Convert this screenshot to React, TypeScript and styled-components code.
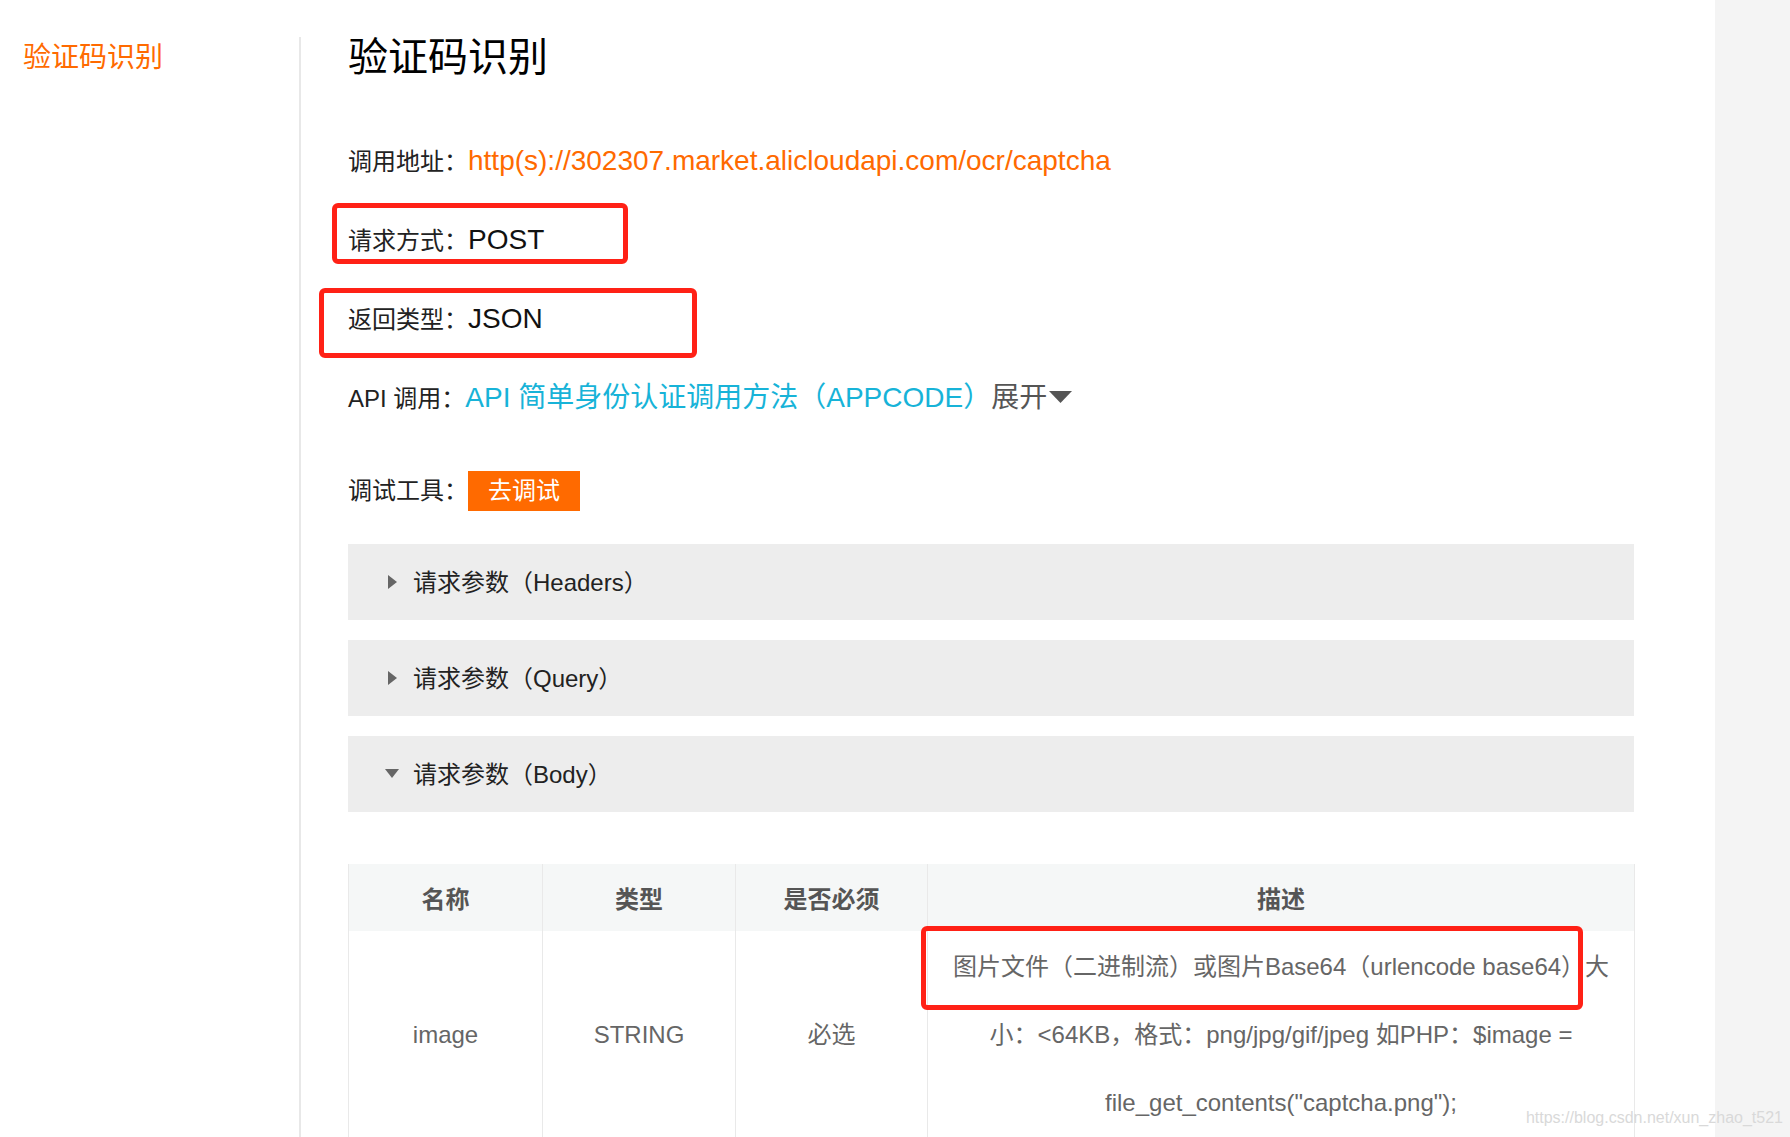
import React from "react";
import styled, { createGlobalStyle } from "styled-components";

const FONT = `"Liberation Sans", Arial, "Noto Sans CJK SC", sans-serif`;

const Global = createGlobalStyle`
  html, body { margin: 0; padding: 0; background: #fff; }
  body { font-family: ${FONT}; }
  #root { width: 1790px; height: 1137px; overflow: hidden; }
`;

const Page = styled.div`
  display: flex;
  width: 1790px;
  height: 1137px;
  overflow: hidden;
  position: relative;
  background: #fff;
`;

const Sidebar = styled.aside`
  flex: none;
  width: 299px;
  box-sizing: border-box;
  padding: 44px 0 0 23px;
`;

const NavItem = styled.div`
  font-size: 28px;
  line-height: 28px;
  color: #ff6a00;
  white-space: nowrap;
`;

const Main = styled.main`
  flex: none;
  width: 1416px;
  box-sizing: border-box;
  margin-top: 37px;
  border-left: 2px solid #e8e8e8;
  padding: 0 81px 0 47px;
  display: flex;
  flex-direction: column;
`;

const RightStrip = styled.div`
  flex: none;
  width: 75px;
  background: #f4f4f4;
`;

const Title = styled.h1`
  margin: 0 0 45px;
  font-size: 40px;
  line-height: 40px;
  font-weight: normal;
  color: #000;
  white-space: nowrap;
`;

const InfoRow = styled.div<{ $gapTop?: number }>`
  position: relative;
  height: 79px;
  margin-top: ${(p) => p.$gapTop ?? 0}px;
  display: flex;
  align-items: center;
  white-space: nowrap;
`;

const Line = styled.div`
  line-height: 1;
  display: flex;
  align-items: baseline;
`;

const Label = styled.span`
  font-size: 24px;
  color: #222;
`;

type Tone = "orange" | "dark" | "link" | "muted";
const toneColor: Record<Tone, string> = {
  orange: "#ff6a00",
  dark: "#111",
  link: "#17b3d8",
  muted: "#555",
};

const Value = styled.span<{ $tone: Tone }>`
  font-size: 28px;
  color: ${(p) => toneColor[p.$tone]};
`;

const Caret = styled.svg`
  margin-left: 2px;
  align-self: center;
  position: relative;
  top: -1px;
`;

const Highlight = styled.div<{ $l: number; $t: number; $w: number; $h: number }>`
  position: absolute;
  left: ${(p) => p.$l}px;
  top: ${(p) => p.$t}px;
  width: ${(p) => p.$w}px;
  height: ${(p) => p.$h}px;
  box-sizing: border-box;
  border: 5px solid #ff2116;
  border-radius: 6px;
  pointer-events: none;
`;

const DebugButton = styled.button`
  height: 40px;
  padding: 0 20px;
  border: none;
  background: #ff6a00;
  color: #fff;
  font-family: ${FONT};
  font-size: 24px;
  line-height: 40px;
  cursor: pointer;
`;

const Panels = styled.div`
  margin-top: 14px;
  display: flex;
  flex-direction: column;
  gap: 20px;
`;

const Panel = styled.div`
  height: 76px;
  box-sizing: border-box;
  padding: 0 0 2px 37px;
  background: #ededed;
  display: flex;
  align-items: center;
  font-size: 24px;
  color: #222;
  white-space: nowrap;
`;

const CaretBox = styled.span`
  width: 14px;
  height: 14px;
  margin-right: 14px;
  display: flex;
  align-items: center;
  justify-content: center;
  position: relative;
  top: 1px;
`;

const Table = styled.table`
  margin-top: 52px;
  width: 1286px;
  table-layout: fixed;
  border-collapse: collapse;
  font-family: ${FONT};
  font-size: 24px;
`;

const Th = styled.th`
  height: 67px;
  padding: 0;
  background: #f5f7f7;
  color: #555;
  font-weight: bold;
  text-align: center;
  vertical-align: middle;
  border-left: 1px solid #e9e9e9;
  border-right: 1px solid #e9e9e9;
`;

const Td = styled.td`
  position: relative;
  padding: 2px 0 0;
  color: #666;
  text-align: center;
  vertical-align: middle;
  line-height: 68px;
  border-left: 1px solid #e9e9e9;
  border-right: 1px solid #e9e9e9;
`;

const DescLine = styled.span`
  display: block;
  white-space: nowrap;
`;

const Watermark = styled.div`
  position: absolute;
  right: 7px;
  bottom: 9px;
  font-size: 16px;
  line-height: 20px;
  color: #d9d9d9;
  white-space: nowrap;
`;

const RightCaret = () => (
  <svg width="9" height="14" viewBox="0 0 9 14">
    <path d="M0 0 L9 7 L0 14 Z" fill="#666" />
  </svg>
);

const DownCaret = () => (
  <svg width="14" height="9" viewBox="0 0 14 9">
    <path d="M0 0 L14 0 L7 9 Z" fill="#666" />
  </svg>
);

export default function App() {
  return (
    <>
      <Global />
      <Page>
        <Sidebar>
          <NavItem>验证码识别</NavItem>
        </Sidebar>
        <Main>
          <Title>验证码识别</Title>

          <InfoRow>
            <Line>
              <Label>调用地址：</Label>
              <Value $tone="orange">http(s)://302307.market.alicloudapi.com/ocr/captcha</Value>
            </Line>
          </InfoRow>

          <InfoRow>
            <Highlight $l={-16} $t={2} $w={296} $h={61} />
            <Line>
              <Label>请求方式：</Label>
              <Value $tone="dark">POST</Value>
            </Line>
          </InfoRow>

          <InfoRow>
            <Highlight $l={-29} $t={8} $w={378} $h={70} />
            <Line>
              <Label>返回类型：</Label>
              <Value $tone="dark">JSON</Value>
            </Line>
          </InfoRow>

          <InfoRow>
            <Line>
              <Label>API 调用：</Label>
              <Value $tone="link">API 简单身份认证调用方法（APPCODE）</Value>
              <Value $tone="muted">展开</Value>
              <Caret width="23" height="12" viewBox="0 0 23 12">
                <path d="M0 0 L23 0 L11.5 12 Z" fill="#555" />
              </Caret>
            </Line>
          </InfoRow>

          <InfoRow $gapTop={14}>
            <Line>
              <Label>调试工具：</Label>
              <DebugButton>去调试</DebugButton>
            </Line>
          </InfoRow>

          <Panels>
            <Panel>
              <CaretBox>
                <RightCaret />
              </CaretBox>
              请求参数（Headers）
            </Panel>
            <Panel>
              <CaretBox>
                <RightCaret />
              </CaretBox>
              请求参数（Query）
            </Panel>
            <Panel>
              <CaretBox>
                <DownCaret />
              </CaretBox>
              请求参数（Body）
            </Panel>
          </Panels>

          <Table>
            <colgroup>
              <col style={{ width: 194 }} />
              <col style={{ width: 193 }} />
              <col style={{ width: 192 }} />
              <col style={{ width: 707 }} />
            </colgroup>
            <thead>
              <tr>
                <Th>名称</Th>
                <Th>类型</Th>
                <Th>是否必须</Th>
                <Th>描述</Th>
              </tr>
            </thead>
            <tbody>
              <tr>
                <Td>image</Td>
                <Td>STRING</Td>
                <Td>必选</Td>
                <Td>
                  <Highlight $l={-7} $t={-5} $w={662} $h={84} />
                  <DescLine>图片文件（二进制流）或图片Base64（urlencode base64）大</DescLine>
                  <DescLine>小：&lt;64KB，格式：png/jpg/gif/jpeg 如PHP：$image =</DescLine>
                  <DescLine>file_get_contents("captcha.png");</DescLine>
                </Td>
              </tr>
            </tbody>
          </Table>
        </Main>
        <RightStrip />
        <Watermark>https://blog.csdn.net/xun_zhao_t521</Watermark>
      </Page>
    </>
  );
}
